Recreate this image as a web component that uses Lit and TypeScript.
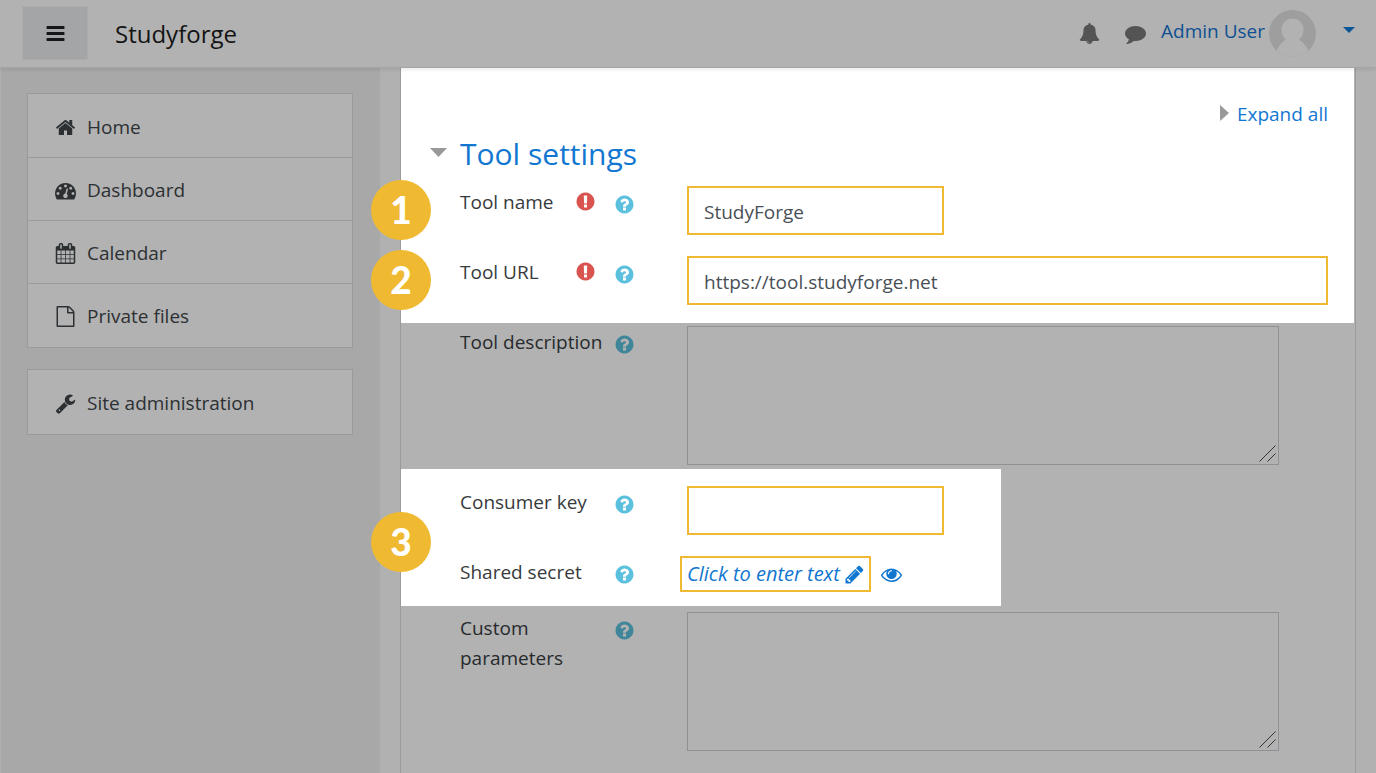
import { LitElement, html, css, svg, nothing } from "lit";
import { customElement, property } from "lit/decorators.js";
import { classMap } from "lit/directives/class-map.js";

const ICONS: Record<string, string> = {
  bars: "M1664 1344v128q0 26-19 45t-45 19h-1408q-26 0-45-19t-19-45v-128q0-26 19-45t45-19h1408q26 0 45 19t19 45zm0-512v128q0 26-19 45t-45 19h-1408q-26 0-45-19t-19-45v-128q0-26 19-45t45-19h1408q26 0 45 19t19 45zm0-512v128q0 26-19 45t-45 19h-1408q-26 0-45-19t-19-45v-128q0-26 19-45t45-19h1408q26 0 45 19t19 45z",
  home: "M1472 992v480q0 26-19 45t-45 19h-384v-384h-256v384h-384q-26 0-45-19t-19-45v-480q0-1 .5-3t.5-3l575-474 575 474q1 2 1 6zm223-69l-62 74q-8 9-21 11h-3q-13 0-21-7l-692-577-692 577q-12 8-24 7-13-2-21-11l-62-74q-8-10-7-23.5t11-21.5l719-599q32-26 76-26t76 26l244 204v-195q0-14 9-23t23-9h192q14 0 23 9t9 23v408l219 182q10 8 11 21.5t-7 23.5z",
  dashboard: "M384 1152q0-53-37.5-90.5t-90.5-37.5-90.5 37.5-37.5 90.5 37.5 90.5 90.5 37.5 90.5-37.5 37.5-90.5zm192-448q0-53-37.5-90.5t-90.5-37.5-90.5 37.5-37.5 90.5 37.5 90.5 90.5 37.5 90.5-37.5 37.5-90.5zm428 481l101-382q6-26-7.5-48.5t-38.5-29.5-48 6.5-30 39.5l-101 382q-60 5-107 43.5t-63 98.5q-20 77 20 146t117 89 146-20 89-117q16-60-6-117t-72-91zm660-33q0-53-37.5-90.5t-90.5-37.5-90.5 37.5-37.5 90.5 37.5 90.5 90.5 37.5 90.5-37.5 37.5-90.5zm-640-640q0-53-37.5-90.5t-90.5-37.5-90.5 37.5-37.5 90.5 37.5 90.5 90.5 37.5 90.5-37.5 37.5-90.5zm448 192q0-53-37.5-90.5t-90.5-37.5-90.5 37.5-37.5 90.5 37.5 90.5 90.5 37.5 90.5-37.5 37.5-90.5zm320 448q0 261-141 483-19 29-54 29h-1402q-35 0-54-29-141-221-141-483 0-182 71-348t191-286 286-191 348-71 348 71 286 191 191 286 71 348z",
  calendar: "M192 1664h288v-288h-288v288zm352 0h320v-288h-320v288zm-352-352h288v-320h-288v320zm352 0h320v-320h-320v320zm-352-384h288v-288h-288v288zm736 736h320v-288h-320v288zm-384-736h320v-288h-320v288zm768 736h288v-288h-288v288zm-384-352h320v-320h-320v320zm-352-864v-288q0-13-9.5-22.5t-22.5-9.5h-64q-13 0-22.5 9.5t-9.5 22.5v288q0 13 9.5 22.5t22.5 9.5h64q13 0 22.5-9.5t9.5-22.5zm736 864h288v-320h-288v320zm-384-384h320v-288h-320v288zm384 0h288v-288h-288v288zm32-480v-288q0-13-9.5-22.5t-22.5-9.5h-64q-13 0-22.5 9.5t-9.5 22.5v288q0 13 9.5 22.5t22.5 9.5h64q13 0 22.5-9.5t9.5-22.5zm384-64v1280q0 52-38 90t-90 38h-1408q-52 0-90-38t-38-90v-1280q0-52 38-90t90-38h128v-96q0-66 47-113t113-47h64q66 0 113 47t47 113v96h384v-96q0-66 47-113t113-47h64q66 0 113 47t47 113v96h128q52 0 90 38t38 90z",
  file: "M1596 380q28 28 48 76t20 88v1152q0 40-28 68t-68 28h-1344q-40 0-68-28t-28-68v-1600q0-40 28-68t68-28h896q40 0 88 20t76 48zm-444-244v376h376q-10-29-22-41l-313-313q-12-12-41-22zm384 1528v-1024h-416q-40 0-68-28t-28-68v-416h-768v1536h1280z",
  wrench: "M448 1472q0-26-19-45t-45-19-45 19-19 45 19 45 45 19 45-19 19-45zm644-420l-682 682q-37 37-90 37-52 0-91-37l-106-108q-38-36-38-90 0-53 38-91l681-681q39 98 114.5 173.5t173.5 114.5zm634-435q0 39-23 106-47 134-164.5 217.5t-258.5 83.5q-185 0-316.5-131.5t-131.5-316.5 131.5-316.5 316.5-131.5q58 0 121.5 16.5t107.5 46.5q16 11 16 28t-16 28l-293 169v224l193 107q5-3 79-48.5t135.5-81 70.5-35.5q15 0 23.5 10t8.5 25z",
  bell: "M912 1696q0-16-16-16-59 0-101.5-42.5t-42.5-101.5q0-16-16-16t-16 16q0 73 51.5 124.5t124.5 51.5q16 0 16-16zm816-288q0 52-38 90t-90 38h-448q0 106-75 181t-181 75-181-75-75-181h-448q-52 0-90-38t-38-90q50-42 91-88t85-119.5 74.5-158.5 50-206 19.5-260q0-152 117-282.5t307-158.5q-8-19-8-39 0-40 28-68t68-28 68 28 28 68q0 20-8 39 190 28 307 158.5t117 282.5q0 139 19.5 260t50 206 74.5 158.5 85 119.5 91 88z",
  comment: "M1792 896q0 174-120 321.5t-326 233-450 85.5q-70 0-145-8-198 175-460 242-49 14-114 22-17 2-30.5-9t-17.5-29v-1q-3-4-.5-12t2-10 4.5-9.5l6-9 7-8.5 8-9q7-8 31-34.5t34.5-38 31-39.5 32.5-51 27-59 26-76q-157-89-247.5-220t-90.5-281q0-130 71-248.5t191-204.5 286-136.5 348-50.5q244 0 450 85.5t326 233 120 321.5z",
  question: "M1024 1376v-192q0-14-9-23t-23-9h-192q-14 0-23 9t-9 23v192q0 14 9 23t23 9h192q14 0 23-9t9-23zm256-672q0-88-55.5-163t-138.5-116-170-41q-243 0-371 213-15 24 8 42l132 100q7 6 19 6 16 0 25-12 53-68 86-92 34-24 86-24 48 0 85.5 26t37.5 59q0 38-20 61t-68 45q-63 28-115.5 86.5t-52.5 125.5v36q0 14 9 23t23 9h192q14 0 23-9t9-23q0-19 21.5-49.5t54.5-49.5q32-18 49-28.5t46-35 44.5-48 28-60.5 12.5-81zm384 192q0 209-103 385.5t-279.5 279.5-385.5 103-385.5-103-279.5-279.5-103-385.5 103-385.5 279.5-279.5 385.5-103 385.5 103 279.5 279.5 103 385.5z",
  exclamation: "M896 128q209 0 385.5 103t279.5 279.5 103 385.5-103 385.5-279.5 279.5-385.5 103-385.5-103-279.5-279.5-103-385.5 103-385.5 279.5-279.5 385.5-103zm128 1247v-190q0-14-9-23.5t-22-9.5h-192q-13 0-23 10t-10 23v190q0 13 10 23t23 10h192q13 0 22-9.5t9-23.5zm-2-344l18-621q0-12-10-18-10-8-24-8h-220q-14 0-24 8-10 6-10 18l17 621q0 10 10 17.5t24 7.5h185q14 0 23.5-7.5t10.5-17.5z",
  pencil: "M491 1536l91-91-235-235-91 91v107h128v128h107zm523-928q0-22-22-22-10 0-17 7l-542 542q-7 7-7 17 0 22 22 22 10 0 17-7l542-542q7-7 7-17zm-54-192l416 416-832 832h-416v-416zm683 96q0 53-37 90l-166 166-416-416 166-165q36-38 90-38 53 0 91 38l235 234q37 39 37 91z",
  eye: "M1664 960q-152-236-381-353 61 104 61 225 0 185-131.5 316.5t-316.5 131.5-316.5-131.5-131.5-316.5q0-121 61-225-229 117-381 353 133 205 333.5 326.5t434.5 121.5 434.5-121.5 333.5-326.5zm-720-384q0-20-14-34t-34-14q-125 0-214.5 89.5t-89.5 214.5q0 20 14 34t34 14 34-14 14-34q0-86 61-147t147-61q20 0 34-14t14-34zm848 384q0 34-20 69-140 230-376.5 368.5t-499.5 138.5-499.5-139-376.5-368q-20-35-20-69t20-69q140-229 376.5-368t499.5-139 499.5 139 376.5 368q20 35 20 69z",
};

@customElement("fa-icon")
class FaIcon extends LitElement {
  @property() name = "";

  static styles = css`
    :host {
      display: block;
      flex: none;
      width: 21px;
      height: 21px;
    }
    .glyph {
      display: block;
      width: 100%;
      height: 100%;
      fill: currentColor;
    }
  `;

  render() {
    return html`<svg class="glyph" viewBox="0 0 1792 1792" aria-hidden="true">
      ${svg`<path d=${ICONS[this.name] ?? ""}></path>`}
    </svg>`;
  }
}

interface FieldLabel {
  id: string;
  text: string;
  required?: boolean;
}

@customElement("app-root")
class AppRoot extends LitElement {
  static styles = css`
    :host {
      --accent: #efba32;
      --link: #1177d1;
      display: flex;
      flex-direction: column;
      min-height: 100vh;
      background: #b1b1b1;
      color: #373a3c;
      font: 19px/30px "Open Sans", "Noto Sans", sans-serif;
    }
    * {
      box-sizing: border-box;
    }
    a {
      color: inherit;
      text-decoration: none;
    }
    button {
      font: inherit;
      color: inherit;
      padding: 0;
      border: 0;
      background: none;
      cursor: pointer;
    }

    .topbar {
      position: relative;
      z-index: 1;
      display: flex;
      align-items: center;
      height: 68px;
      padding: 0 21px 1px 22px;
      background: #b2b2b2;
      border-bottom: 1px solid #a5a5a5;
      box-shadow: 0 2px 4px rgba(0, 0, 0, 0.08);
    }
    .menu {
      display: grid;
      place-items: center;
      width: 66px;
      height: 54px;
      background: #a3a5a7;
      border: 1px solid #a9abad;
      color: #141618;
    }
    .brand {
      margin: 2px auto 0 27px;
      font-size: 24px;
      color: #141414;
    }
    .tools {
      display: flex;
      align-items: center;
    }
    .tool {
      margin-right: 25px;
      color: #545454;
    }
    .tool + .tool {
      margin-right: 15px;
    }
    .user {
      display: flex;
      align-items: center;
      gap: 4px;
      color: #0e5092;
    }
    .user-name {
      padding-bottom: 4px;
    }
    .avatar {
      width: 47px;
      height: 47px;
    }
    .caret {
      width: 12px;
      height: 6px;
      margin: 0 0 6px 27px;
      fill: #0c5597;
    }

    .body {
      flex: 1;
      display: flex;
    }
    .sidebar {
      flex: none;
      display: flex;
      flex-direction: column;
      gap: 21px;
      width: 380px;
      padding: 25px 27px 25px 26px;
      background: #a8a8a8;
      border-left: 1px solid #b0b0b0;
    }
    .nav {
      padding: 1px 0;
      background: #b2b2b2;
      border: 1px solid #9a9a9a;
      color: #2c3033;
    }
    .nav-item {
      display: flex;
      align-items: center;
      gap: 11px;
      height: 62px;
      padding: 2px 27px 0;
    }
    .nav-item + .nav-item {
      height: 63px;
      border-top: 1px solid #9a9a9a;
    }

    .main {
      flex: 1;
      min-width: 0;
      display: flex;
      padding: 0 20px;
    }
    .panel {
      flex: 1;
      min-width: 0;
      padding-bottom: 22px;
      background: #b2b2b2;
      border: 1px solid #9b9b9b;
      border-width: 0 1px;
    }
    .group {
      position: relative;
      display: flex;
      flex-direction: column;
      gap: 21px;
      padding: 0 27px 0 59px;
    }
    .lit {
      background: #fff;
    }
    .essentials {
      margin-right: 1px;
      padding: 31px 26px 18px 59px;
    }
    .description {
      padding-top: 3px;
      padding-bottom: 4px;
      color: #272a2c;
    }
    .credentials {
      max-width: 600px;
      padding-top: 17px;
      padding-bottom: 14px;
    }
    .custom {
      padding-top: 6px;
      color: #272a2c;
    }

    .heading {
      display: flex;
      flex-direction: column;
      margin-bottom: -14px;
      color: var(--link);
    }
    .expand {
      display: flex;
      align-items: center;
      align-self: flex-end;
      gap: 8px;
    }
    .expand-arrow {
      width: 9px;
      height: 16px;
      margin-bottom: 2px;
      fill: #999;
    }
    .title {
      margin: 0 0 0 -30px;
      font-size: 30px;
      font-weight: 400;
      line-height: 50px;
    }
    .title-toggle {
      display: flex;
      align-items: center;
      gap: 13px;
    }
    .title-arrow {
      width: 17px;
      height: 9px;
      margin-bottom: 4px;
      fill: #999;
    }

    .row {
      position: relative;
      display: grid;
      grid-template-columns: 175px 1fr;
      align-items: start;
    }
    .row-label {
      grid-column: 1;
      grid-row: 1;
      max-width: 150px;
      padding-top: 1px;
    }
    .marks {
      grid-column: 1;
      grid-row: 1;
      display: flex;
      justify-content: flex-end;
      align-items: flex-start;
      gap: 18px;
      padding-top: 5px;
      pointer-events: none;
    }
    .required {
      color: #d9534f;
    }
    .help {
      margin-top: 3px;
      color: #5bc0de;
      pointer-events: auto;
    }
    .description .help,
    .custom .help {
      color: #40869b;
    }
    .field {
      grid-column: 2;
      grid-row: 1;
      min-width: 0;
      padding-left: 52px;
    }
    .input {
      display: block;
      width: 257px;
      height: 49px;
      padding: 3px 15px 0;
      border: 2px solid var(--accent);
      border-radius: 0;
      background: #fff;
      color: #495057;
      font: inherit;
      outline: none;
    }
    .full {
      width: 100%;
    }
    .area-wrap {
      position: relative;
      max-width: 592px;
    }
    .area {
      display: block;
      width: 100%;
      height: 139px;
      padding: 8px 16px;
      border: 1px solid #8f9197;
      border-radius: 0;
      background: transparent;
      color: inherit;
      font: inherit;
      resize: none;
      outline: none;
    }
    .grip {
      position: absolute;
      right: 3px;
      bottom: 3px;
      width: 17px;
      height: 17px;
      stroke: #333;
      fill: none;
    }
    .secret {
      display: flex;
      align-items: center;
      gap: 10px;
      margin-left: -7px;
      color: var(--link);
    }
    .secret-text {
      display: flex;
      align-items: center;
      gap: 4px;
      height: 36px;
      padding: 0 4px 0 5px;
      border: 2px solid var(--accent);
      font-size: 20px;
      font-style: italic;
    }
    .badge {
      position: absolute;
      left: -30px;
      display: grid;
      place-items: center;
      width: 60px;
      height: 60px;
      border-radius: 50%;
      background: var(--accent);
      color: #fff;
      font: 900 37px/60px Lato, "Open Sans", sans-serif;
    }
    .row-badge {
      left: -89px;
      top: -6px;
    }
    .group-badge {
      top: 43px;
    }
  `;

  private nav = [
    [
      { icon: "home", text: "Home" },
      { icon: "dashboard", text: "Dashboard" },
      { icon: "calendar", text: "Calendar" },
      { icon: "file", text: "Private files" },
    ],
    [{ icon: "wrench", text: "Site administration" }],
  ];

  private label({ id, text, required }: FieldLabel) {
    return html`
      <label class="row-label" for=${id}>${text}</label>
      <div class="marks">
        ${required ? html`<fa-icon class="required" name="exclamation"></fa-icon>` : nothing}
        <button class="help" type="button" aria-label="Help with ${text}">
          <fa-icon name="question"></fa-icon>
        </button>
      </div>
    `;
  }

  private textRow(field: FieldLabel, value: string, full = false, badge = "") {
    return html`<div class="row">
      ${badge ? html`<span class="badge row-badge">${badge}</span>` : nothing}
      ${this.label(field)}
      <div class="field">
        <input class=${classMap({ input: true, full })} id=${field.id} type="text" .value=${value} />
      </div>
    </div>`;
  }

  private areaRow(field: FieldLabel) {
    return html`<div class="row">
      ${this.label(field)}
      <div class="field">
        <div class="area-wrap">
          <textarea class="area" id=${field.id}></textarea>
          <svg class="grip" viewBox="0 0 17 17" aria-hidden="true"><path d="M0.5 16.5L16.5 0.5M8.5 16.5L16.5 8.5" /></svg>
        </div>
      </div>
    </div>`;
  }

  render() {
    return html`
      <header class="topbar">
        <button class="menu" aria-label="Side panel"><fa-icon name="bars"></fa-icon></button>
        <a class="brand" href="#">Studyforge</a>
        <div class="tools">
          <button class="tool" aria-label="Notifications"><fa-icon name="bell"></fa-icon></button>
          <button class="tool" aria-label="Messages"><fa-icon name="comment"></fa-icon></button>
          <a class="user" href="#">
            <span class="user-name">Admin User</span>
            <svg class="avatar" viewBox="0 0 47 47" aria-hidden="true">
              <defs><clipPath id="disc"><circle cx="23.5" cy="23.5" r="23.5" /></clipPath></defs>
              <g clip-path="url(#disc)">
                <rect width="47" height="47" fill="#9e9e9e" />
                <path d="M5 47Q9 34 17 29.5Q12.500 26 12.500 19.500A11 11 0 0 1 34.500 19.500Q34.500 26 30 29.500Q38 34 42 47Z" fill="#b2b2b2" />
              </g>
            </svg>
          </a>
          <button class="user" aria-label="User menu">
            <svg class="caret" viewBox="0 0 12 6" aria-hidden="true"><path d="M0 0H12L6 6Z" /></svg>
          </button>
        </div>
      </header>
      <div class="body">
        <aside class="sidebar">
          ${this.nav.map(
            (items) => html`<nav class="nav">
              ${items.map(
                (item) => html`<a class="nav-item" href="#"><fa-icon name=${item.icon}></fa-icon>${item.text}</a>`
              )}
            </nav>`
          )}
        </aside>
        <main class="main">
          <form class="panel">
            <section class="group lit essentials">
              <div class="heading">
                <a class="expand" href="#">
                  <svg class="expand-arrow" viewBox="0 0 9 16" aria-hidden="true"><path d="M0 0L9 8L0 16Z" /></svg>
                  Expand all
                </a>
                <h3 class="title">
                  <button class="title-toggle" type="button">
                    <svg class="title-arrow" viewBox="0 0 17 9" aria-hidden="true"><path d="M0 0H17L8.5 9Z" /></svg>
                    Tool settings
                  </button>
                </h3>
              </div>
              ${this.textRow({ id: "name", text: "Tool name", required: true }, "StudyForge", false, "1")}
              ${this.textRow({ id: "url", text: "Tool URL", required: true }, "https://tool.studyforge.net", true, "2")}
            </section>
            <section class="group description">
              ${this.areaRow({ id: "description", text: "Tool description" })}
            </section>
            <section class="group lit credentials">
              <span class="badge group-badge">3</span>
              ${this.textRow({ id: "key", text: "Consumer key" }, "")}
              <div class="row">
                ${this.label({ id: "secret", text: "Shared secret" })}
                <div class="field">
                  <div class="secret">
                    <button class="secret-text" id="secret" type="button">
                      Click to enter text <fa-icon name="pencil"></fa-icon>
                    </button>
                    <button type="button" aria-label="Reveal"><fa-icon name="eye"></fa-icon></button>
                  </div>
                </div>
              </div>
            </section>
            <section class="group custom">
              ${this.areaRow({ id: "custom", text: "Custom parameters" })}
            </section>
          </form>
        </main>
      </div>
    `;
  }
}
